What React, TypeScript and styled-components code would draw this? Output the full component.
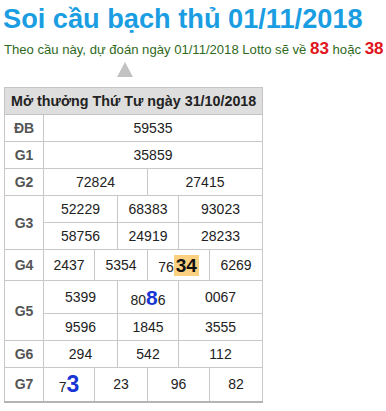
import React from 'react';
import styled, { createGlobalStyle } from 'styled-components';

const GlobalStyle = createGlobalStyle`
  body {
    margin: 0;
    background: #fff;
    font-family: Arial, "Liberation Sans", sans-serif;
  }
`;

const Page = styled.div`
  padding: 0 3px;
  width: 386px;
  box-sizing: border-box;
  overflow: hidden;
`;

const Title = styled.h1`
  margin: 0;
  padding-top: 2px;
  font-size: 27.2px;
  line-height: 34px;
  font-weight: bold;
  color: #1b9de2;
  white-space: nowrap;
`;

const Prediction = styled.p`
  margin: 3px 0 0 1px;
  font-size: 13.1px;
  line-height: 20px;
  color: #2f6a1c;
  white-space: nowrap;
`;

const Lotto = styled.b`
  font-size: 17px;
  color: #e0141a;
`;

const Arrow = styled.div`
  width: 0;
  height: 0;
  margin: 2px 0 10px 114px;
  border-left: 8px solid transparent;
  border-right: 8px solid transparent;
  border-bottom: 15px solid #c2c2c2;
`;

const Results = styled.table`
  margin-left: 1px;
  width: 259px;
  table-layout: fixed;
  border-collapse: collapse;
  border: 1px solid #c4c4c4;
  border-bottom: 2px solid #b4b4b4;
  font-size: 14px;
  color: #222;
`;

const Head = styled.th`
  height: 26px;
  padding: 0 0 0 6px;
  text-align: left;
  font-size: 14.3px;
  font-weight: bold;
  color: #222;
  background: #dedede;
  border: 1px solid #c4c4c4;
  white-space: nowrap;
`;

const Row = styled.tr<{ $h?: number }>`
  height: ${(p) => p.$h ?? 27}px;
`;

const Prize = styled.td`
  padding: 0;
  text-align: center;
  font-weight: bold;
  color: #555;
  border: 1px solid #c8c8c8;
`;

const Cell = styled.td`
  padding: 0;
  text-align: center;
  border: 1px solid #c8c8c8;
  white-space: nowrap;
`;

const Hit = styled.span`
  display: inline-block;
  padding: 0 2px;
  line-height: 21px;
  font-size: 19px;
  font-weight: bold;
  color: #111;
  background: #fbd080;
`;

const Pick = styled.span<{ $size: number }>`
  font-size: ${(p) => p.$size}px;
  font-weight: bold;
  color: #1836d6;
  line-height: 1;
`;

export default function App() {
  return (
    <Page>
      <GlobalStyle />
      <Title>Soi cầu bạch thủ 01/11/2018</Title>
      <Prediction>
        Theo cầu này, dự đoán ngày 01/11/2018 Lotto sẽ về <Lotto>83</Lotto> hoặc <Lotto>38</Lotto>
      </Prediction>
      <Arrow />
      <Results>
        <colgroup>
          <col style={{ width: 39 }} />
          <col style={{ width: 51 }} />
          <col style={{ width: 23 }} />
          <col style={{ width: 30 }} />
          <col style={{ width: 31 }} />
          <col style={{ width: 31 }} />
          <col style={{ width: 53 }} />
        </colgroup>
        <thead>
          <tr>
            <Head colSpan={7}>Mở thưởng Thứ Tư ngày 31/10/2018</Head>
          </tr>
        </thead>
        <tbody>
          <Row>
            <Prize>ĐB</Prize>
            <Cell colSpan={6}>59535</Cell>
          </Row>
          <Row>
            <Prize>G1</Prize>
            <Cell colSpan={6}>35859</Cell>
          </Row>
          <Row>
            <Prize>G2</Prize>
            <Cell colSpan={3}>72824</Cell>
            <Cell colSpan={3}>27415</Cell>
          </Row>
          <Row>
            <Prize rowSpan={2}>G3</Prize>
            <Cell colSpan={2}>52229</Cell>
            <Cell colSpan={2}>68383</Cell>
            <Cell colSpan={2}>93023</Cell>
          </Row>
          <Row>
            <Cell colSpan={2}>58756</Cell>
            <Cell colSpan={2}>24919</Cell>
            <Cell colSpan={2}>28233</Cell>
          </Row>
          <Row $h={31}>
            <Prize>G4</Prize>
            <Cell>2437</Cell>
            <Cell colSpan={2}>5354</Cell>
            <Cell colSpan={2}>
              76<Hit>34</Hit>
            </Cell>
            <Cell>6269</Cell>
          </Row>
          <Row $h={33}>
            <Prize rowSpan={2}>G5</Prize>
            <Cell colSpan={2}>5399</Cell>
            <Cell colSpan={2}>
              80<Pick $size={21}>8</Pick>6
            </Cell>
            <Cell colSpan={2}>0067</Cell>
          </Row>
          <Row>
            <Cell colSpan={2}>9596</Cell>
            <Cell colSpan={2}>1845</Cell>
            <Cell colSpan={2}>3555</Cell>
          </Row>
          <Row>
            <Prize>G6</Prize>
            <Cell colSpan={2}>294</Cell>
            <Cell colSpan={2}>542</Cell>
            <Cell colSpan={2}>112</Cell>
          </Row>
          <Row $h={34}>
            <Prize>G7</Prize>
            <Cell>
              7<Pick $size={23}>3</Pick>
            </Cell>
            <Cell colSpan={2}>23</Cell>
            <Cell colSpan={2}>96</Cell>
            <Cell>82</Cell>
          </Row>
        </tbody>
      </Results>
    </Page>
  );
}
